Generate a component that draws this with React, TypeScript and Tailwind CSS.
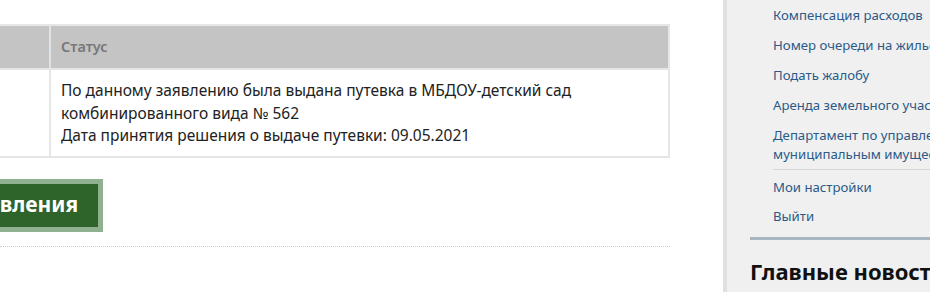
import React from "react";

const menu = [
  ["Компенсация расходов"],
  ["Номер очереди на жильё"],
  ["Подать жалобу"],
  ["Аренда земельного участка"],
  ["Департамент по управлению", "муниципальным имуществом"],
];

export default function App() {
  return (
    <div
      className="flex w-[930px] h-[292px] overflow-hidden bg-white"
      style={{ fontFamily: "'Noto Sans', 'Open Sans', sans-serif" }}
    >
      {/* Main column */}
      <div className="w-[723px] shrink-0 overflow-hidden pt-[24px]">
        <div className="w-[670px]">
          <div className="-ml-[200px] w-[870px] border-2 border-[#e6e6e6]">
            <div className="flex h-[42px] bg-[#c4c4c4]">
              <div className="w-[249px] border-r-2 border-[#e2e2e2]" />
              <div className="flex items-center px-[10px] text-[14.5px] font-semibold text-[#787878]">Статус</div>
            </div>
            <div className="flex border-t-2 border-[#e6e6e6]">
              <div className="w-[249px] border-r-2 border-[#e6e6e6]" />
              <div className="py-[9px] pl-[10px] text-[15.5px] leading-[22.5px] text-[#222]">
                По данному заявлению была выдана путевка в МБДОУ-детский сад
                <br />
                комбинированного вида № 562
                <br />
                Дата принятия решения о выдаче путевки: 09.05.2021
              </div>
            </div>
          </div>

          <div className="mt-[21px] flex">
            <button className="-ml-[221px] h-[53px] border-[5px] border-[#8fb18f] bg-[#2e6329] pl-[20px] pr-[20px] text-[21px] font-bold text-white">
              Подать копию заявления
            </button>
          </div>

          <div className="mt-[14px] border-b border-dotted border-[#cfcfcf]" />
        </div>
      </div>

      {/* Sidebar */}
      <div className="flex-1 border-l-[4px] border-[#e0e0e0] bg-[#f0f0f0] pl-[23px]">
        <div className="pl-[23px] text-[13.2px] leading-[19px] text-[#2b5a88]">
          <div className="border-b border-[#d6d6d6]">
            {menu.map((m) => (
              <div key={m[0]} className="whitespace-nowrap py-[5.5px]">
                {m.map((l) => (
                  <div key={l}>{l}</div>
                ))}
              </div>
            ))}
          </div>
          <div className="pt-[3px] pb-[6px]">
            <div className="py-[5px]">Мои настройки</div>
            <div className="py-[5px]">Выйти</div>
          </div>
        </div>
        <div className="h-[3px] bg-[#a9b5bf]" />
        <div className="mt-[17px] whitespace-nowrap text-[22px] font-bold leading-[28px] text-[#111]">
          Главные новости
        </div>
      </div>
    </div>
  );
}
